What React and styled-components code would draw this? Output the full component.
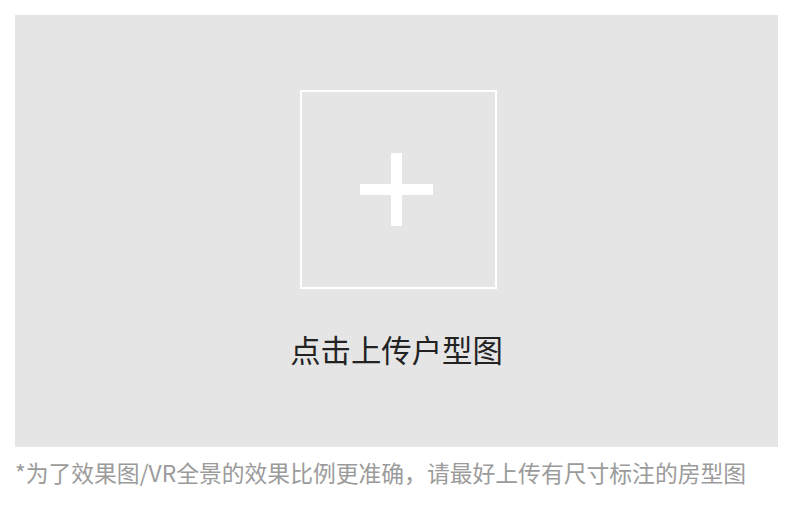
import React from 'react';
import styled, { createGlobalStyle } from 'styled-components';

const GlobalStyle = createGlobalStyle`
  html, body {
    margin: 0;
    padding: 0;
    background: #ffffff;
  }
  body {
    font-family: "Noto Sans CJK SC", "Noto Sans", sans-serif;
  }
`;

const Page = styled.div`
  width: 796px;
  height: 506px;
  padding: 15px 0 0 15px;
  box-sizing: border-box;
`;

const Panel = styled.div`
  width: 763px;
  height: 432px;
  background: #e5e5e5;
  display: flex;
  flex-direction: column;
  align-items: center;
  padding-top: 75px;
  box-sizing: border-box;
  cursor: pointer;
`;

const UploadBox = styled.div`
  width: 197px;
  height: 199px;
  margin-left: 4px;
  border: 2px solid #ffffff;
  box-sizing: border-box;
  display: flex;
  align-items: center;
  justify-content: center;
`;

const Plus = styled.svg`
  display: block;
  margin-right: 4px;
`;

const Label = styled.div`
  margin-top: 38px;
  font-size: 30.4px;
  line-height: 44px;
  color: #222222;
`;

const Hint = styled.p`
  margin: 9px 0 0;
  font-size: 22.8px;
  line-height: 34px;
  color: #9b9b9b;
  white-space: nowrap;
`;

function PlusIcon() {
  return (
    <Plus width="73" height="73" viewBox="0 0 73 73">
      <rect x="31" y="0" width="11" height="73" fill="#ffffff" />
      <rect x="0" y="31" width="73" height="11" fill="#ffffff" />
    </Plus>
  );
}

export default function App() {
  return (
    <>
      <GlobalStyle />
      <Page>
        <Panel>
          <UploadBox>
            <PlusIcon />
          </UploadBox>
          <Label>点击上传户型图</Label>
        </Panel>
        <Hint>*为了效果图/VR全景的效果比例更准确，请最好上传有尺寸标注的房型图</Hint>
      </Page>
    </>
  );
}
